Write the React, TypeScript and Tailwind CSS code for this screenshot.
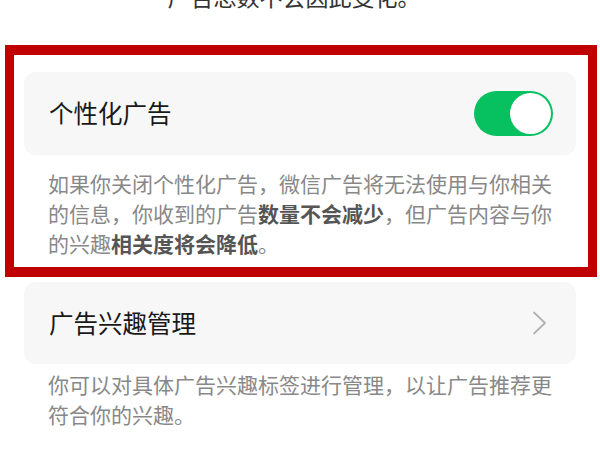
const font = {
  fontFamily: '"Noto Sans CJK SC", "Noto Sans", sans-serif',
};

function Toggle() {
  return (
    <div className="flex h-[45px] w-[79px] items-center justify-end rounded-full bg-[#07c160] p-[2px]">
      <div className="h-[41px] w-[41px] rounded-full bg-white" />
    </div>
  );
}

function Chevron() {
  return (
    <svg width="16" height="24" viewBox="0 0 16 24" fill="none" className="mr-[4px]">
      <path d="M2 1.5L13 12L2 22.5" stroke="#b2b2b2" strokeWidth="1.8" strokeLinecap="round" strokeLinejoin="round" />
    </svg>
  );
}

export default function App() {
  return (
    <div className="min-h-[451px] w-[600px] overflow-hidden bg-white" style={font}>
      <div className="h-[45px] overflow-hidden pr-[12px]">
        <p className="-mt-[20px] whitespace-nowrap text-center text-[23px] leading-[32px] text-[#333333]">
          广告总数不会因此变化。
        </p>
      </div>

      <section className="ml-[5px] mr-[3px] border-[9px] border-b-[10px] border-t-[10px] border-[#c00000] pb-[9px] pl-[10px] pr-[12px] pt-[17px]">
        <div className="flex h-[83px] items-center justify-between rounded-[12px] bg-[#f7f7f7] pl-[25px] pr-[23px]">
          <span className="text-[24.5px] text-[#191919]">个性化广告</span>
          <Toggle />
        </div>
        <p className="mt-[13px] whitespace-nowrap px-[24px] text-[21px] leading-[30px] text-[#888888]">
          如果你关闭个性化广告，微信广告将无法使用与你相关
          <br />
          的信息，你收到的广告<b className="font-bold text-[#555555]">数量不会减少</b>，但广告内容与你
          <br />
          的兴趣<b className="font-bold text-[#555555]">相关度将会降低</b>。
        </p>
      </section>

      <div className="mx-[24px] mt-[5px]">
        <div className="flex h-[82px] items-center justify-between rounded-[12px] bg-[#f7f7f7] pl-[25px] pr-[24px]">
          <span className="text-[24.5px] text-[#191919]">广告兴趣管理</span>
          <Chevron />
        </div>
        <p className="mt-[5px] whitespace-nowrap px-[24px] text-[21px] leading-[30px] text-[#888888]">
          你可以对具体广告兴趣标签进行管理，以让广告推荐更
          <br />
          符合你的兴趣。
        </p>
      </div>
    </div>
  );
}
